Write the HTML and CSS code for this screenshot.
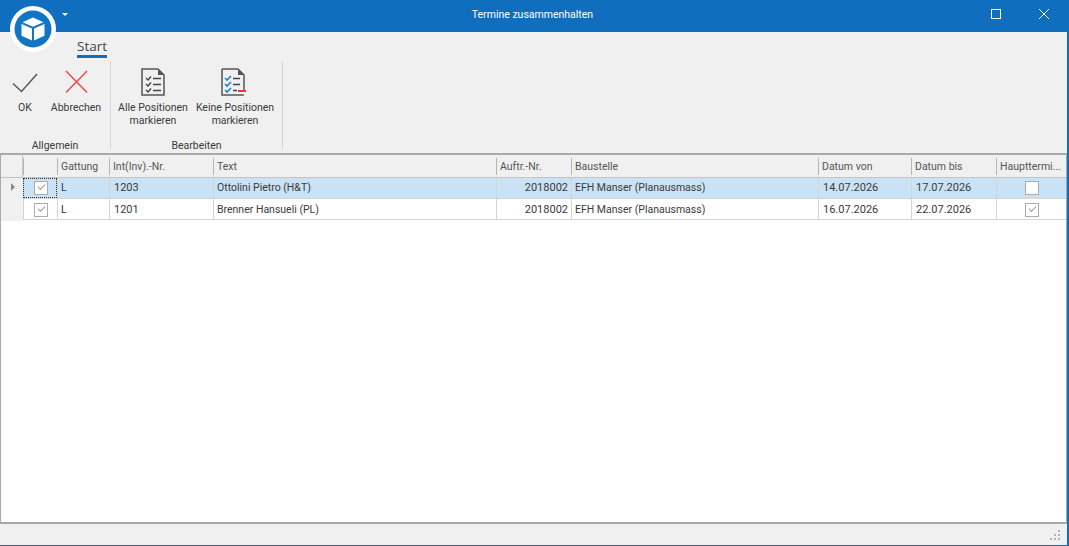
FILE: index.html
```html
<!DOCTYPE html>
<html lang="de">
  <head>
    <meta charset="UTF-8" />
    <title>Termine zusammenhalten</title>
    <link rel="stylesheet" href="styles.css">
  </head>
  <body>
    <div class="window">
      <header class="titlebar">
        <div class="logo">
          <svg width="46" height="46" viewBox="0 0 46 46">
            <circle cx="23" cy="23" r="23" fill="#fff" />
            <circle cx="23" cy="23" r="18.5" fill="#1274c4" />
            <path d="M23 11.5 L33.5 16.2 L23 20.8 L12.5 16.2 Z" fill="#fff" />
            <path d="M11.5 18 L22 22.6 L22 34.5 L11.5 29.8 Z" fill="#fff" />
            <path d="M34.5 18 L24 22.6 L24 34.5 L34.5 29.8 Z" fill="#fff" />
          </svg>
        </div>
        <span class="quick-arrow"></span>
        <span class="title">Termine zusammenhalten</span>
        <div class="window-buttons">
          <svg width="12" height="12" viewBox="0 0 12 12">
            <rect x="1.5" y="1.5" width="9" height="9" fill="none" stroke="#fff" />
          </svg>
          <svg width="12" height="12" viewBox="0 0 12 12">
            <path d="M1 1 L11 11 M11 1 L1 11" fill="none" stroke="#fff" stroke-width="1" />
          </svg>
        </div>
      </header>

      <nav class="tabs">
        <a class="tab">Start</a>
      </nav>

      <section class="ribbon">
        <div class="group group-general">
          <div class="group-items">
            <div class="ribbon-btn btn-ok">
              <svg width="26" height="28" viewBox="0 0 26 28">
                <path d="M1 15.5 L9.5 23.5 L25 6" fill="none" stroke="#555" stroke-width="1.4" />
              </svg>
              <span>OK</span>
            </div>
            <div class="ribbon-btn btn-cancel">
              <svg width="26" height="28" viewBox="0 0 26 28">
                <path d="M3 3 L24 24.5 M24 3 L3 24.5" fill="none" stroke="#ef4a50" stroke-width="1.5" />
              </svg>
              <span>Abbrechen</span>
            </div>
          </div>
          <div class="group-label">Allgemein</div>
        </div>
        <div class="group group-edit">
          <div class="group-items">
            <div class="ribbon-btn btn-all">
              <svg width="26" height="28" viewBox="0 0 26 28">
                <path d="M2 1 H18 L24 7 V27 H2 Z" fill="none" stroke="#555" stroke-width="1.5" />
                <path d="M18 1 V7 H24 Z" fill="#555" />
                <path d="M6 10 L8 12 L11 8.5 M6 16 L8 18 L11 14.5 M6 22 L8 24 L11 20.5" fill="none" stroke="#444" stroke-width="1.4" />
                <path d="M13 10.5 H21 M13 16.5 H21 M13 22.5 H21" stroke="#444" stroke-width="1.5" />
              </svg>
              <span>Alle Positionen<br>markieren</span>
            </div>
            <div class="ribbon-btn btn-none">
              <svg width="26" height="28" viewBox="0 0 26 28">
                <path d="M2 1 H18 L24 7 V23 M24 27 H2 V1" fill="none" stroke="#555" stroke-width="1.5" />
                <path d="M18 1 V7 H24 Z" fill="#555" />
                <path d="M5 10 L7 12 L11 8 M5 16 L7 18 L11 14 M5 22 L7 24 L11 20" fill="none" stroke="#1b7fd0" stroke-width="1.6" />
                <path d="M13 10.5 H20 M13 16.5 H20 M13 22.5 H17" stroke="#444" stroke-width="1.5" />
                <path d="M18 23 H26" stroke="#ef3340" stroke-width="2" />
              </svg>
              <span>Keine Positionen<br>markieren</span>
            </div>
          </div>
          <div class="group-label">Bearbeiten</div>
        </div>
      </section>

      <main class="grid">
        <div class="row head">
          <div class="cell"></div>
          <div class="cell"></div>
          <div class="cell">Gattung</div>
          <div class="cell">Int(Inv).-Nr.</div>
          <div class="cell">Text</div>
          <div class="cell">Auftr.-Nr.</div>
          <div class="cell">Baustelle</div>
          <div class="cell">Datum von</div>
          <div class="cell">Datum bis</div>
          <div class="cell">Haupttermi...</div>
        </div>
        <div class="row data selected">
          <div class="cell indicator"><span class="arrow"></span></div>
          <div class="cell center focus"><span class="check checked"></span></div>
          <div class="cell">L</div>
          <div class="cell num">1203</div>
          <div class="cell">Ottolini Pietro (H&amp;T)</div>
          <div class="cell num right">2018002</div>
          <div class="cell">EFH Manser (Planausmass)</div>
          <div class="cell num">14.07.2026</div>
          <div class="cell num">17.07.2026</div>
          <div class="cell center"><span class="check empty"></span></div>
        </div>
        <div class="row data">
          <div class="cell indicator"></div>
          <div class="cell center"><span class="check checked"></span></div>
          <div class="cell">L</div>
          <div class="cell num">1201</div>
          <div class="cell">Brenner Hansueli (PL)</div>
          <div class="cell num right">2018002</div>
          <div class="cell">EFH Manser (Planausmass)</div>
          <div class="cell num">16.07.2026</div>
          <div class="cell num">22.07.2026</div>
          <div class="cell center"><span class="check checked"></span></div>
        </div>
      </main>

      <footer class="statusbar">
        <svg width="11" height="11" viewBox="0 0 11 11" fill="#b4b4b4">
          <rect x="8" y="0" width="2" height="2" />
          <rect x="4" y="4" width="2" height="2" />
          <rect x="8" y="4" width="2" height="2" />
          <rect x="0" y="8" width="2" height="2" />
          <rect x="4" y="8" width="2" height="2" />
          <rect x="8" y="8" width="2" height="2" />
        </svg>
      </footer>
    </div>
  </body>
</html>
```

FILE: styles.css
```css
html, body {
  margin: 0;
  padding: 0;
  height: 100%;
  overflow: hidden;
}

body {
  font-family: Roboto, "Liberation Sans", sans-serif;
  font-size: 10.5px;
  color: #3b3b3b;
  background-color: #f0f0f0;
}

.window {
  position: relative;
  display: flex;
  flex-direction: column;
  box-sizing: border-box;
  height: 546px;
  border-right: 2px solid #106ebe;
  border-bottom: 1px solid #106ebe;
}

.titlebar {
  display: flex;
  align-items: center;
  justify-content: center;
  height: 32px;
  padding-bottom: 4px;
  box-sizing: border-box;
  margin-right: -2px;
  background-color: #106ebe;
  color: #fff;
}

.title {
  margin-right: 4px;
}

.logo {
  position: absolute;
  left: 10px;
  top: 6px;
  width: 46px;
  height: 46px;
}

.quick-arrow {
  position: absolute;
  left: 62px;
  top: 13px;
  border-left: 3px solid transparent;
  border-right: 3px solid transparent;
  border-top: 3px solid #fff;
}

.window-buttons {
  position: absolute;
  right: 17px;
  top: 8px;
  display: flex;
  gap: 36px;
}

.tabs {
  display: flex;
  height: 26px;
  padding-left: 77px;
}

.tab {
  box-sizing: border-box;
  height: 26px;
  padding-top: 5px;
  border-bottom: 3px solid #106ebe;
  font-family: "Open Sans", sans-serif;
  font-size: 13.5px;
  line-height: 18px;
  color: #444;
}

.ribbon {
  display: flex;
  box-sizing: border-box;
  height: 95px;
  padding-top: 4px;
}

.group {
  height: 87px;
  border-right: 1px solid #d4d4d4;
}

.group-general {
  width: 110px;
}

.group-edit {
  width: 171px;
}

.group-items {
  display: flex;
  box-sizing: border-box;
  height: 75px;
  padding-top: 6px;
}

.group-label {
  height: 17px;
  line-height: 17px;
  text-align: center;
}

.ribbon-btn {
  display: flex;
  flex-direction: column;
  align-items: center;
  text-align: center;
  line-height: 13px;
  white-space: nowrap;
}

.ribbon-btn svg {
  margin-bottom: 5px;
  flex-shrink: 0;
}

.btn-ok {
  width: 50px;
}

.btn-cancel {
  width: 52px;
}

.btn-all {
  width: 84px;
}

.btn-none {
  width: 80px;
}

.btn-none svg {
  margin-right: 4px;
}

.grid {
  flex: 1;
  box-sizing: border-box;
  border: 1px solid #a9a9a9;
  border-top-width: 2px;
  border-bottom-width: 2px;
  background-color: #fff;
}

.row {
  display: grid;
  grid-template-columns: 22px 34px 52px 104px 283px 75px 247px 93px 85px 70px;
}

.head {
  box-sizing: border-box;
  height: 23px;
  border-bottom: 1px solid #c4c4c4;
  background-color: #f0f0f0;
  color: #555;
  line-height: 23px;
}

.head .cell {
  position: relative;
  padding-left: 4px;
  white-space: nowrap;
}

.head .cell:not(:first-child)::before {
  content: "";
  position: absolute;
  left: 0;
  top: 3px;
  bottom: 3px;
  width: 1px;
  background-color: #b5b5b5;
}

.head .cell:first-child {
  box-sizing: border-box;
  border-right: 1px solid #c9c9c9;
}

.data {
  box-sizing: border-box;
  height: 21px;
  border-bottom: 1px solid #d4d4d4;
  line-height: 20px;
}

.data + .data {
  line-height: 21px;
}

.data .cell {
  box-sizing: border-box;
  padding: 0 3px;
  border-left: 1px solid #d4d4d4;
  white-space: nowrap;
}

.data .num {
  padding-left: 4px;
  font-size: 11px;
}

.data .cell:nth-child(3) {
  color: #1f3566;
}

.data .indicator {
  position: relative;
  margin-bottom: -1px;
  border-left: none;
  background-color: #f0f0f0;
}

.selected {
  background-color: #c9e2f5;
}

.right {
  text-align: right;
}

.center {
  display: flex;
  align-items: center;
  justify-content: center;
}

.focus {
  outline: 1px dotted #333;
  outline-offset: -1px;
}

.arrow {
  position: absolute;
  left: 10px;
  top: 5px;
  border-top: 4px solid transparent;
  border-bottom: 4px solid transparent;
  border-left: 4px solid #8a8a8a;
}

.check {
  display: block;
  position: relative;
  width: 12px;
  height: 12px;
  border: 1px solid #adadad;
  background-color: #fff;
}

.check.checked::after {
  content: "";
  position: absolute;
  left: 3px;
  top: 2px;
  width: 6px;
  height: 3px;
  border-left: 1px solid #9a9a9a;
  border-bottom: 1px solid #9a9a9a;
  transform: rotate(-45deg);
}

.statusbar {
  display: flex;
  align-items: flex-end;
  justify-content: flex-end;
  box-sizing: border-box;
  height: 21px;
  padding: 0 6px 4px 0;
  background-color: #f0f0f0;
}
```
